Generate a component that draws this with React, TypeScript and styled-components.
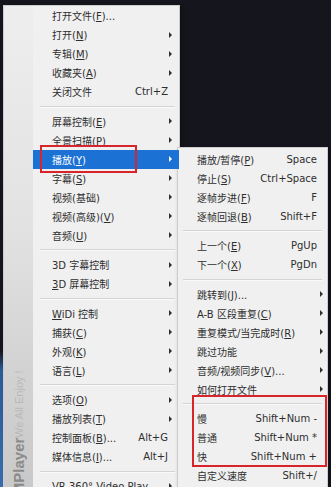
import styled, { createGlobalStyle } from "styled-components";
import type { ReactNode } from "react";

type Item = {
  label: ReactNode;
  keys?: string;
  more?: boolean;
  active?: boolean;
  mark?: string;
};

// joined: no separator line in front of the section
type Section = { items: Item[]; mark?: string; joined?: boolean };

const GlobalStyle = createGlobalStyle`
  html, body {
    margin: 0;
    padding: 0;
    background: #15161d;
    overflow: hidden;
  }
  body {
    font-family: "DejaVu Sans", "Noto Sans CJK SC", sans-serif;
  }
`;

const Desktop = styled.div`
  display: flex;
  align-items: flex-start;
  height: 100vh;
  overflow: hidden;
`;

const DesktopEdge = styled.div`
  flex: none;
  width: 3px;
  align-self: stretch;
  background: linear-gradient(#15161d 0, #15161d 72%, #2b5c9a 76%, #3a6db0 100%);
`;

const Menu = styled.div<{ $width: number; $top: number; $shift?: number }>`
  flex: none;
  display: flex;
  box-sizing: border-box;
  width: ${(p) => p.$width}px;
  margin-top: ${(p) => p.$top}px;
  margin-left: ${(p) => p.$shift ?? 0}px;
  background: #f0f0f0;
  border: 1px solid #cdcdcd;
  box-shadow: 2px 2px 4px rgba(0, 0, 0, 0.35);
`;

const Sidebar = styled.div`
  flex: none;
  width: 29px;
  display: flex;
  flex-direction: column;
  justify-content: flex-end;
  align-items: center;
  background: linear-gradient(#eeeeee 0%, #e2e2e2 45%, #d2d2d2 75%, #c8c8c8 100%);
`;

const Brand = styled.div`
  writing-mode: vertical-rl;
  transform: rotate(180deg);
  white-space: nowrap;
  font-family: "Liberation Sans", Arial, sans-serif;
  font-size: 15px;
  font-weight: bold;
  color: #8a8a8a;
  margin-bottom: -8px;
`;

const Slogan = styled.span`
  font-size: 11px;
  font-weight: normal;
  color: #b9b9b9;
  margin-left: 6px;
`;

const Items = styled.div<{ $padTop: number }>`
  flex: 1;
  min-width: 0;
  padding-top: ${(p) => p.$padTop}px;
  padding-bottom: 3px;
`;

const Row = styled.div<{ $active?: boolean; $end: number }>`
  display: flex;
  align-items: center;
  height: 19px;
  padding: 0 ${(p) => p.$end}px 0 19px;
  font-size: 10px;
  white-space: nowrap;
  background: ${(p) => (p.$active ? "#1c72d4" : "transparent")};
  color: ${(p) => (p.$active ? "#ffffff" : "#2e2e2e")};
`;

const Label = styled.span`
  flex: 1;
  min-width: 0;
  overflow: hidden;
`;

const Keys = styled.span`
  flex: none;
  margin-left: 12px;
`;

const Arrow = styled.span`
  flex: none;
  width: 0;
  height: 0;
  border-left: 3.5px solid currentColor;
  border-top: 3px solid transparent;
  border-bottom: 3px solid transparent;
`;

const Separator = styled.div<{ $inset: string }>`
  height: 10.5px;
  display: flex;
  align-items: center;
  margin: ${(p) => p.$inset};
  &::before {
    content: "";
    flex: 1;
    height: 1px;
    background: #d4d4d4;
    box-shadow: 0 1px 0 #fafafa;
  }
`;

const Callout = styled.div<{ $inset: string }>`
  position: relative;
  &::after {
    content: "";
    position: absolute;
    inset: ${(p) => p.$inset};
    border: 2px solid #d8242b;
    pointer-events: none;
  }
`;

const mainSections: Section[] = [
  {
    items: [
      { label: <>打开文件(<u>F</u>)...</> },
      { label: <>打开(<u>N</u>)</>, more: true },
      { label: <>专辑(<u>M</u>)</>, more: true },
      { label: <>收藏夹(<u>A</u>)</>, more: true },
      { label: "关闭文件", keys: "Ctrl+Z" },
    ],
  },
  {
    items: [
      { label: <>屏幕控制(<u>E</u>)</>, more: true },
      { label: <>全景扫描(<u>P</u>)</>, more: true },
      { label: <>播放(<u>Y</u>)</>, more: true, active: true, mark: "-5px 42px -4.5px 7px" },
      { label: <>字幕(<u>S</u>)</>, more: true },
      { label: "视频(基础)", more: true },
      { label: <>视频(高级)(<u>V</u>)</>, more: true },
      { label: <>音频(<u>U</u>)</>, more: true },
    ],
  },
  {
    items: [
      { label: "3D 字幕控制", more: true },
      { label: <><u>3</u>D 屏幕控制</>, more: true },
    ],
  },
  {
    items: [
      { label: <><u>W</u>iDi 控制</>, more: true },
      { label: <>捕获(<u>C</u>)</>, more: true },
      { label: <>外观(<u>K</u>)</>, more: true },
      { label: <>语言(<u>L</u>)</>, more: true },
    ],
  },
  {
    items: [
      { label: <>选项(<u>O</u>)</>, more: true },
      { label: <>播放列表(<u>T</u>)</>, more: true },
      { label: <>控制面板(<u>B</u>)...</>, keys: "Alt+G" },
      { label: <>媒体信息(<u>I</u>)...</>, keys: "Alt+J" },
    ],
  },
  { items: [{ label: "VR 360° Video Play", more: true }] },
];

const playSections: Section[] = [
  {
    items: [
      { label: <>播放/暂停(<u>P</u>)</>, keys: "Space" },
      { label: <>停止(<u>S</u>)</>, keys: "Ctrl+Space" },
      { label: <>逐帧步进(<u>F</u>)</>, keys: "F" },
      { label: <>逐帧回退(<u>B</u>)</>, keys: "Shift+F" },
    ],
  },
  {
    items: [
      { label: <>上一个(<u>E</u>)</>, keys: "PgUp" },
      { label: <>下一个(<u>X</u>)</>, keys: "PgDn" },
    ],
  },
  {
    items: [
      { label: <>跳转到(<u>J</u>)...</>, more: true },
      { label: <>A-B 区段重复(<u>C</u>)</>, more: true },
      { label: <>重复模式/当完成时(<u>R</u>)</>, more: true },
      { label: "跳过功能", more: true },
      { label: <>音频/视频同步(<u>V</u>)...</>, more: true },
      { label: "如何打开文件", more: true },
    ],
  },
  {
    mark: "-3.5px 0 -1px 14px",
    items: [
      { label: "慢", keys: "Shift+Num -" },
      { label: "普通", keys: "Shift+Num *" },
      { label: "快", keys: "Shift+Num +" },
    ],
  },
  { joined: true, items: [{ label: "自定义速度", keys: "Shift+/" }] },
];

function MenuBody({
  sections,
  sepInset,
  keysEnd,
  arrowEnd,
}: {
  sections: Section[];
  sepInset: string;
  keysEnd: number;
  arrowEnd: number;
}) {
  return (
    <>
      {sections.map((section, i) => {
        const body = (
          <>
            {i > 0 && !section.joined && <Separator $inset={sepInset} />}
            {section.items.map((item, j) => {
              const row = (
                <Row key={j} $active={item.active} $end={item.more ? arrowEnd : keysEnd}>
                  <Label>{item.label}</Label>
                  {item.keys && <Keys>{item.keys}</Keys>}
                  {item.more && <Arrow />}
                </Row>
              );
              return item.mark ? (
                <Callout key={j} $inset={item.mark}>
                  {row}
                </Callout>
              ) : (
                row
              );
            })}
          </>
        );
        return section.mark ? (
          <Callout key={i} $inset={section.mark}>
            {body}
          </Callout>
        ) : (
          <div key={i}>{body}</div>
        );
      })}
    </>
  );
}

export default function App() {
  return (
    <>
      <GlobalStyle />
      <Desktop>
        <DesktopEdge />
        <Menu $width={177} $top={5}>
          <Sidebar>
            <Brand>
              KMPlayer
              <Slogan>We All Enjoy !</Slogan>
            </Brand>
          </Sidebar>
          <Items $padTop={0}>
            <MenuBody sections={mainSections} sepInset="0 4px 0 7px" keysEnd={11} arrowEnd={7} />
          </Items>
        </Menu>
        <Menu $width={151} $top={147} $shift={-3}>
          <Items $padTop={1.5}>
            <MenuBody sections={playSections} sepInset="0 5px 0 5px" keysEnd={10} arrowEnd={4.5} />
          </Items>
        </Menu>
      </Desktop>
    </>
  );
}
